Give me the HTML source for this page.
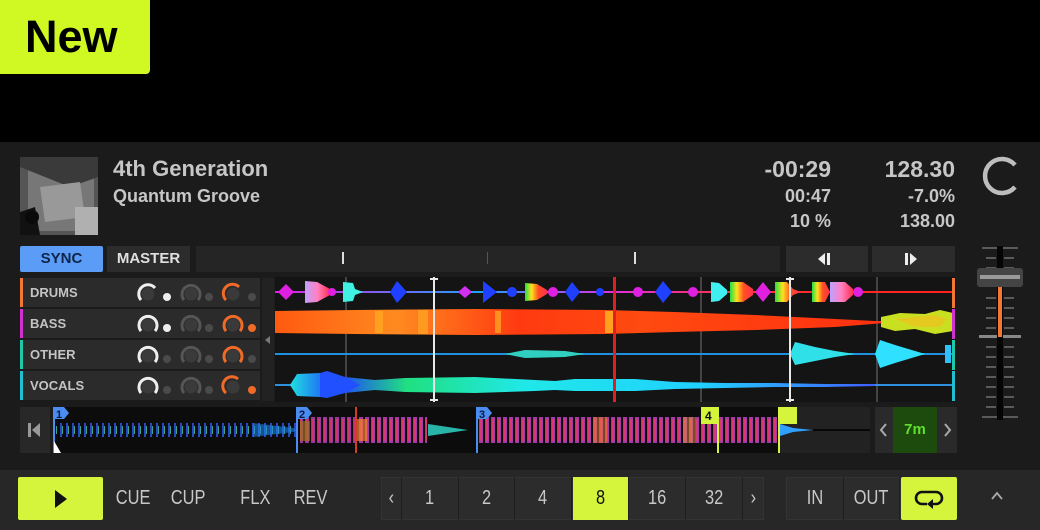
<!DOCTYPE html>
<html><head><meta charset="utf-8"><style>
*{margin:0;padding:0;box-sizing:border-box}
body{width:1040px;height:530px;background:#000;overflow:hidden;position:relative;font-family:"Liberation Sans",Arial,sans-serif}
.a{position:absolute}
.badge{left:0;top:0;width:150px;height:74px;background:#d0f823;border-radius:0 0 4px 0;color:#000;font-weight:bold;font-size:45px;line-height:74px;padding-left:25px}
.deck{left:0;top:142px;width:1040px;height:328px;background:#1b1b1b}
.bot{left:0;top:470px;width:1040px;height:60px;background:#272727}
.t{color:#c6c6c6;font-weight:bold}
.num{color:#c6c6c6;text-align:right;font-weight:bold}
.stem{left:20px;width:240px;height:29px;background:#2b2b2b;color:#c4c4c4;font-size:13px;font-weight:bold;line-height:29px;padding-left:10px}
.stem i{position:absolute;left:0;top:0;width:3px;height:29px}
.cell{top:477px;height:43px;color:#c8c8c8;font-size:20px;line-height:43px;text-align:center;border-right:1px solid #1e1e1e}
.cond{display:inline-block;transform:scaleX(.82)}
</style></head><body>
<div class="a badge">New</div>
<div class="a deck"></div>
<div class="a bot"></div>

<svg class="a" style="left:20px;top:157px" width="78" height="78">
<rect width="78" height="78" fill="#555"/>
<rect x="8" y="8" width="66" height="66" fill="#777"/>
<polygon points="0,10 50,30 78,20 78,0 0,0" fill="#3a3a3a"/>
<polygon points="20,30 60,25 65,60 25,65" fill="#999"/>
<rect x="55" y="50" width="23" height="28" fill="#b0b0b0"/>
<path d="M0 55 L15 50 L20 78 L0 78Z" fill="#111"/>
<circle cx="12" cy="60" r="7" fill="#0a0a0a"/>
</svg>
<div class="a t" style="left:113px;top:156px;font-size:22px">4th Generation</div>
<div class="a t" style="left:113px;top:186px;font-size:18px">Quantum Groove</div>
<div class="a num" style="left:700px;width:131px;top:156px;font-size:23px">-00:29</div>
<div class="a num" style="left:700px;width:131px;top:186px;font-size:18px">00:47</div>
<div class="a num" style="left:700px;width:131px;top:211px;font-size:18px">10 %</div>
<div class="a num" style="left:820px;width:135px;top:156px;font-size:23px">128.30</div>
<div class="a num" style="left:820px;width:135px;top:186px;font-size:18px">-7.0%</div>
<div class="a num" style="left:820px;width:135px;top:211px;font-size:18px">138.00</div>
<svg class="a" style="left:980px;top:156px" width="40" height="40"><path d="M35 9 A17 17 0 1 0 35 31" fill="none" stroke="#bdbdbd" stroke-width="4.5"/></svg>

<div class="a" style="left:20px;top:246px;width:83px;height:26px;background:#5a9cf6;border-radius:2px;color:#10244a;font-weight:bold;font-size:15px;text-align:center;line-height:26px">SYNC</div>
<div class="a" style="left:107px;top:246px;width:83px;height:26px;background:#2c2c2c;color:#e0e0e0;font-weight:bold;font-size:15px;text-align:center;line-height:26px">MASTER</div>
<div class="a" style="left:196px;top:246px;width:584px;height:26px;background:#252525"></div>
<div class="a" style="left:342px;top:252px;width:2px;height:12px;background:#ddd"></div>
<div class="a" style="left:487px;top:252px;width:1px;height:12px;background:#555"></div>
<div class="a" style="left:634px;top:252px;width:2px;height:12px;background:#ddd"></div>
<div class="a" style="left:786px;top:246px;width:82px;height:26px;background:#2c2c2c"></div>
<div class="a" style="left:872px;top:246px;width:83px;height:26px;background:#2c2c2c"></div>
<svg class="a" style="left:818px;top:252px" width="16" height="14"><polygon points="0,7 7,1 7,13" fill="#eee"/><rect x="9" y="1" width="3" height="12" fill="#eee"/></svg>
<svg class="a" style="left:905px;top:252px" width="16" height="14"><rect x="0" y="1" width="3" height="12" fill="#eee"/><polygon points="5,1 12,7 5,13" fill="#eee"/></svg>

<div class="a stem" style="top:278px"><i style="background:#f07830"></i>DRUMS</div>
<div class="a stem" style="top:309px"><i style="background:#d030d0"></i>BASS</div>
<div class="a stem" style="top:340px"><i style="background:#20c8a8"></i>OTHER</div>
<div class="a stem" style="top:371px"><i style="background:#20c0d0"></i>VOCALS</div>
<div class="a" style="left:262px;top:278px;width:12px;height:123px;background:#222"></div>
<svg class="a" style="left:264px;top:335px" width="8" height="10"><polygon points="6,1 1,5 6,9" fill="#777"/></svg>
<svg class="a" style="left:130px;top:278px" width="130" height="124">
<defs><g id="k"><circle cx="0" cy="0" r="6.5" fill="#3a3a3a"/></g></defs>
<g fill="none" stroke-width="3" stroke-linecap="butt">
<g transform="translate(18,16)"><use href="#k"/><path d="M-7 6 A9 9 0 1 1 7 -6" stroke="#eee"/></g>
<g transform="translate(61,16)"><use href="#k"/><path d="M-7 6 A9 9 0 1 1 7 6" stroke="#555"/></g>
<g transform="translate(103,16)"><use href="#k"/><path d="M-7 6 A9 9 0 1 1 6 -7" stroke="#f06a28"/></g>
<g transform="translate(18,47)"><use href="#k"/><path d="M-7 6 A9 9 0 1 1 7 6" stroke="#eee"/></g>
<g transform="translate(61,47)"><use href="#k"/><path d="M-7 6 A9 9 0 1 1 7 6" stroke="#555"/></g>
<g transform="translate(103,47)"><use href="#k"/><path d="M-7 6 A9 9 0 1 1 7 6" stroke="#f06a28"/></g>
<g transform="translate(18,78)"><use href="#k"/><path d="M-7 6 A9 9 0 1 1 7 6" stroke="#eee"/></g>
<g transform="translate(61,78)"><use href="#k"/><path d="M-7 6 A9 9 0 1 1 7 6" stroke="#555"/></g>
<g transform="translate(103,78)"><use href="#k"/><path d="M-7 6 A9 9 0 1 1 7 6" stroke="#f06a28"/></g>
<g transform="translate(18,109)"><use href="#k"/><path d="M-7 6 A9 9 0 1 1 7 6" stroke="#eee"/></g>
<g transform="translate(61,109)"><use href="#k"/><path d="M-7 6 A9 9 0 1 1 7 6" stroke="#555"/></g>
<g transform="translate(103,109)"><use href="#k"/><path d="M-7 6 A9 9 0 1 1 5 -8" stroke="#f06a28"/></g>
</g>
<circle cx="37" cy="19" r="4" fill="#eee"/><circle cx="79" cy="19" r="4" fill="#4a4a4a"/><circle cx="122" cy="19" r="4" fill="#4a4a4a"/>
<circle cx="37" cy="50" r="4" fill="#eee"/><circle cx="79" cy="50" r="4" fill="#4a4a4a"/><circle cx="122" cy="50" r="4" fill="#f06a28"/>
<circle cx="37" cy="81" r="4" fill="#4a4a4a"/><circle cx="79" cy="81" r="4" fill="#4a4a4a"/><circle cx="122" cy="81" r="4" fill="#4a4a4a"/>
<circle cx="37" cy="112" r="4" fill="#4a4a4a"/><circle cx="79" cy="112" r="4" fill="#4a4a4a"/><circle cx="122" cy="112" r="4" fill="#f06a28"/>
</svg>

<svg class="a" style="left:275px;top:277px" width="681" height="125">
<defs>
<linearGradient id="ln" x1="0" x2="1"><stop offset="0" stop-color="#e020e0"/><stop offset=".3" stop-color="#20a0ff"/><stop offset=".5" stop-color="#e030e0"/><stop offset=".7" stop-color="#ff3030"/><stop offset="1" stop-color="#ff2020"/></linearGradient>
<linearGradient id="bs" x1="0" x2="1"><stop offset="0" stop-color="#ff5a10"/><stop offset=".2" stop-color="#ff8a20"/><stop offset=".4" stop-color="#ff3a10"/><stop offset=".6" stop-color="#ff4a10"/><stop offset="1" stop-color="#ff3010"/></linearGradient>
<linearGradient id="vc" x1="0" x2="1"><stop offset="0" stop-color="#20e0e0"/><stop offset=".08" stop-color="#2040ff"/><stop offset=".2" stop-color="#20e080"/><stop offset=".4" stop-color="#20e8e8"/><stop offset=".7" stop-color="#20d0ff"/><stop offset="1" stop-color="#4060ff"/></linearGradient>
<linearGradient id="rb" x1="0" x2="1"><stop offset="0" stop-color="#20e040"/><stop offset=".3" stop-color="#ffe020"/><stop offset=".6" stop-color="#ff5020"/><stop offset="1" stop-color="#ff3050"/></linearGradient>
<linearGradient id="pb" x1="0" x2="1"><stop offset="0" stop-color="#c0a0ff"/><stop offset=".5" stop-color="#ff80c0"/><stop offset="1" stop-color="#ff3050"/></linearGradient>
</defs>
<rect width="681" height="125" fill="#141414"/>
<rect x="70" y="0" width="2" height="125" fill="#444"/>
<rect x="425" y="0" width="2" height="125" fill="#444"/>
<rect x="601" y="0" width="2" height="125" fill="#444"/>
<rect x="0" y="14" width="677" height="2" fill="url(#ln)"/>
<polygon points="3,15 11,7 19,15 11,23" fill="#e020e0"/>
<polygon points="30,4 42,5 55,12 55,18 42,25 30,26" fill="url(#pb)"/>
<circle cx="57" cy="15" r="4" fill="#e020e0"/>
<polygon points="68,5 78,6 80,12 88,15 80,18 78,24 68,25" fill="#40f0e0"/>
<polygon points="115,15 122,4 132,15 122,26" fill="#2040ff"/>
<polygon points="183,15 190,9 197,15 190,21" fill="#d030f0"/>
<polygon points="208,4 222,15 208,26" fill="#2040ff"/>
<circle cx="237" cy="15" r="5" fill="#2040ff"/>
<polygon points="250,6 262,7 272,13 272,17 262,23 250,24" fill="url(#rb)"/>
<circle cx="278" cy="15" r="5" fill="#e020e0"/>
<polygon points="290,15 297,5 305,15 297,25" fill="#2040ff"/>
<circle cx="325" cy="15" r="4" fill="#2040ff"/>
<circle cx="363" cy="15" r="5" fill="#e020e0"/>
<polygon points="380,15 388,4 397,15 388,26" fill="#2040ff"/>
<circle cx="418" cy="15" r="5" fill="#e020e0"/>
<polygon points="436,5 444,6 452,13 452,17 444,24 436,25" fill="#40f0f0"/>
<polygon points="455,5 468,5 478,12 478,18 468,25 455,25" fill="url(#rb)"/>
<polygon points="480,15 488,5 496,15 488,25" fill="#e020e0"/>
<polygon points="500,5 512,5 518,12 526,15 518,18 512,25 500,25" fill="url(#rb)"/>
<polygon points="537,5 550,5 555,15 550,25 537,25" fill="url(#rb)"/>
<polygon points="555,5 570,5 578,12 578,18 570,25 555,25" fill="url(#pb)"/>
<circle cx="583" cy="15" r="5" fill="#e020e0"/>
<polygon points="0,34 80,33 200,32 330,33 400,35 480,38 560,42 600,44 610,46 560,50 480,53 400,55 330,57 200,58 80,57 0,56" fill="url(#bs)"/>
<rect x="100" y="34" width="8" height="22" fill="#ffa020"/>
<rect x="143" y="33" width="10" height="24" fill="#ff9a20"/>
<rect x="220" y="34" width="6" height="22" fill="#ff9020"/>
<rect x="330" y="34" width="8" height="22" fill="#ffa020"/>
<rect x="600" y="44" width="80" height="2" fill="#ff3020"/>
<polygon points="606,40 625,36 650,37 665,33 678,36 678,54 660,57 640,52 620,54 606,50" fill="#c8e020"/>
<polygon points="620,42 640,40 660,38 672,42 665,50 640,50" fill="#f0c020" opacity=".7"/>
<rect x="0" y="76" width="677" height="2" fill="#2090e0"/>
<polygon points="230,77 250,73 290,74 310,77 290,80 250,81" fill="#30d0c0"/>
<polygon points="515,77 520,65 540,70 560,74 580,77 560,80 540,84 520,88" fill="#30e0e8"/>
<polygon points="600,77 605,63 620,68 640,74 650,77 640,80 620,86 605,91" fill="#30e0ff"/>
<rect x="670" y="68" width="6" height="18" fill="#30c0ff"/>
<rect x="0" y="107" width="677" height="2" fill="#3090e0"/>
<polygon points="15,108 22,97 45,96 70,100 100,103 130,101 200,100 260,103 280,104 300,102 360,102 400,105 450,106 500,106 550,107 600,107 600,109 550,110 500,110 450,111 400,112 360,114 300,114 280,113 260,114 200,116 130,115 100,113 70,116 45,120 22,119" fill="url(#vc)"/>
<polygon points="45,96 52,94 70,100 85,108 70,116 52,121 45,120" fill="#2050ff"/>
<rect x="338" y="0" width="3" height="125" fill="#e02020"/>
<rect x="158" y="0" width="2" height="125" fill="#e8e8e8"/>
<rect x="155" y="1" width="8" height="2" fill="#e8e8e8"/><rect x="155" y="122" width="8" height="2" fill="#e8e8e8"/>
<rect x="514" y="0" width="2" height="125" fill="#e8e8e8"/>
<rect x="511" y="1" width="8" height="2" fill="#e8e8e8"/><rect x="511" y="122" width="8" height="2" fill="#e8e8e8"/>
<rect x="677" y="1" width="3" height="30" fill="#f07830"/>
<rect x="677" y="32" width="3" height="30" fill="#d030d0"/>
<rect x="677" y="63" width="3" height="30" fill="#20c8a8"/>
<rect x="677" y="94" width="3" height="30" fill="#20c0d0"/>
</svg>

<div class="a" style="left:20px;top:407px;width:30px;height:46px;background:#282828"></div>
<svg class="a" style="left:26px;top:422px" width="18" height="16"><rect x="2" y="1" width="3" height="14" fill="#999"/><polygon points="14,1 6,8 14,15" fill="#999"/></svg>
<svg class="a" style="left:53px;top:407px" width="817" height="46">
<defs>
<pattern id="bl" width="6" height="46" patternUnits="userSpaceOnUse"><rect x="1" y="16" width="2" height="14" fill="#2a48c0"/><rect x="3" y="19" width="1" height="8" fill="#40a090"/></pattern>
<pattern id="pk" width="6" height="46" patternUnits="userSpaceOnUse"><rect x="0" y="10" width="4" height="26" fill="#c040c0"/><rect x="1" y="12" width="2" height="22" fill="#ff4080"/></pattern>
</defs>
<rect width="817" height="46" fill="#0c0c0c"/>
<rect x="727" width="90" height="46" fill="#222"/>
<rect x="3" y="10" width="240" height="26" fill="url(#bl)"/>
<polygon points="200,16 240,21 244,23 240,25 200,30" fill="#2080e0" opacity=".6"/>
<rect x="247" y="8" width="55" height="30" fill="url(#pk)" opacity=".8"/>
<rect x="247" y="14" width="10" height="20" fill="#a07020" opacity=".7"/>
<rect x="304" y="8" width="70" height="30" fill="url(#pk)" opacity=".85"/>
<rect x="304" y="12" width="10" height="22" fill="#f08030" opacity=".7"/>
<polygon points="375,17 395,20 415,23 395,26 375,29" fill="#30e0d0" opacity=".8"/>
<rect x="425" y="6" width="300" height="34" fill="url(#pk)" opacity=".85"/>
<rect x="540" y="10" width="14" height="26" fill="#f08030" opacity=".5"/>
<rect x="630" y="10" width="12" height="26" fill="#e09040" opacity=".5"/>
<polygon points="727,17 740,21 760,23 740,25 727,29" fill="#30a0ff"/>
<rect x="760" y="22" width="57" height="2" fill="#080808"/>
<rect x="0" y="0" width="2" height="46" fill="#4a8cf0"/>
<polygon points="0,0 11,0 16,6 11,12 0,12" fill="#4a8cf0"/><text x="3" y="11" font-size="11" font-weight="bold" fill="#0a1a40">1</text>
<polygon points="1,34 8,46 1,46" fill="#fff"/>
<rect x="243" y="0" width="2" height="46" fill="#4a8cf0"/>
<polygon points="243,0 254,0 259,6 254,12 243,12" fill="#4a8cf0"/><text x="246" y="11" font-size="11" font-weight="bold" fill="#0a1a40">2</text>
<rect x="302" y="0" width="2" height="46" fill="#d04020"/>
<rect x="423" y="0" width="2" height="46" fill="#4a8cf0"/>
<polygon points="423,0 434,0 439,6 434,12 423,12" fill="#4a8cf0"/><text x="426" y="11" font-size="11" font-weight="bold" fill="#0a1a40">3</text>
<rect x="664" y="0" width="2" height="46" fill="#d4f53c"/>
<rect x="648" y="0" width="18" height="17" fill="#d4f53c"/><text x="652" y="13" font-size="12" font-weight="bold" fill="#111">4</text>
<rect x="725" y="0" width="2" height="46" fill="#d4f53c"/>
<rect x="725" y="0" width="19" height="17" fill="#d4f53c"/>
</svg>
<div class="a" style="left:875px;top:407px;width:82px;height:46px;background:#2a2a2a"></div>
<div class="a" style="left:893px;top:407px;width:44px;height:46px;background:#1d4a0d;color:#5ee02a;font-weight:bold;font-size:15px;text-align:center;line-height:46px">7m</div>
<svg class="a" style="left:878px;top:422px" width="12" height="16"><path d="M8 2 L3 8 L8 14" fill="none" stroke="#aaa" stroke-width="2"/></svg>
<svg class="a" style="left:942px;top:422px" width="12" height="16"><path d="M3 2 L8 8 L3 14" fill="none" stroke="#aaa" stroke-width="2"/></svg>

<svg class="a" style="left:975px;top:244px" width="50" height="184">
<g fill="#5a5a5a">
<rect x="7" y="3" width="15" height="2"/><rect x="28" y="3" width="15" height="2"/>
<rect x="11" y="13" width="10" height="2"/><rect x="29" y="13" width="10" height="2"/>
<rect x="11" y="23" width="10" height="2"/><rect x="29" y="23" width="10" height="2"/>
<rect x="11" y="53" width="10" height="2"/><rect x="29" y="53" width="10" height="2"/>
<rect x="11" y="63" width="10" height="2"/><rect x="29" y="63" width="10" height="2"/>
<rect x="11" y="73" width="10" height="2"/><rect x="29" y="73" width="10" height="2"/>
<rect x="11" y="83" width="10" height="2"/><rect x="29" y="83" width="10" height="2"/>
<rect x="4" y="91" width="42" height="3" fill="#888"/>
<rect x="11" y="102" width="10" height="2"/><rect x="29" y="102" width="10" height="2"/>
<rect x="11" y="112" width="10" height="2"/><rect x="29" y="112" width="10" height="2"/>
<rect x="11" y="122" width="10" height="2"/><rect x="29" y="122" width="10" height="2"/>
<rect x="11" y="132" width="10" height="2"/><rect x="29" y="132" width="10" height="2"/>
<rect x="11" y="142" width="10" height="2"/><rect x="29" y="142" width="10" height="2"/>
<rect x="11" y="152" width="10" height="2"/><rect x="29" y="152" width="10" height="2"/>
<rect x="11" y="162" width="10" height="2"/><rect x="29" y="162" width="10" height="2"/>
<rect x="7" y="172" width="15" height="2"/><rect x="28" y="172" width="15" height="2"/>
</g>
<rect x="22" y="2" width="6" height="174" fill="#050505"/>
<rect x="23" y="43" width="4" height="50" fill="#f07830"/>
<rect x="2" y="24" width="46" height="19" rx="3" fill="#444"/>
<rect x="5" y="31" width="40" height="4" fill="#999"/>
</svg>

<div class="a" style="left:18px;top:477px;width:85px;height:43px;background:#d4f53c;border-radius:2px"></div>
<svg class="a" style="left:52px;top:488px" width="18" height="22"><polygon points="3,2 15,11 3,20" fill="#111"/></svg>
<div class="a" style="left:108px;top:477px;width:50px;height:43px;color:#c8c8c8;font-size:20px;line-height:43px;text-align:center"><span class="cond">CUE</span></div>
<div class="a" style="left:163px;top:477px;width:50px;height:43px;color:#c8c8c8;font-size:20px;line-height:43px;text-align:center"><span class="cond">CUP</span></div>
<div class="a" style="left:230px;top:477px;width:50px;height:43px;color:#c8c8c8;font-size:20px;line-height:43px;text-align:center"><span class="cond">FLX</span></div>
<div class="a" style="left:286px;top:477px;width:50px;height:43px;color:#c8c8c8;font-size:20px;line-height:43px;text-align:center"><span class="cond">REV</span></div>

<div class="a" style="left:381px;top:477px;width:383px;height:43px;background:#2c2c2c;border:1px solid #333"></div>
<div class="a cell" style="left:381px;width:21px"><span class="cond">‹</span></div>
<div class="a cell" style="left:402px;width:57px"><span class="cond">1</span></div>
<div class="a cell" style="left:459px;width:56px"><span class="cond">2</span></div>
<div class="a cell" style="left:515px;width:57px"><span class="cond">4</span></div>
<div class="a cell" style="left:573px;width:56px;background:#d4f53c;color:#111"><span class="cond">8</span></div>
<div class="a cell" style="left:629px;width:57px"><span class="cond">16</span></div>
<div class="a cell" style="left:686px;width:57px"><span class="cond">32</span></div>
<div class="a cell" style="left:743px;width:21px;border:none"><span class="cond">›</span></div>

<div class="a" style="left:786px;top:477px;width:115px;height:43px;background:#2c2c2c;border:1px solid #333"></div>
<div class="a cell" style="left:787px;width:57px"><span class="cond">IN</span></div>
<div class="a cell" style="left:844px;width:56px"><span class="cond">OUT</span></div>
<div class="a" style="left:901px;top:477px;width:56px;height:43px;background:#d4f53c;border-radius:2px"></div>
<svg class="a" style="left:913px;top:486px" width="32" height="24"><path d="M14 18 H9 A6 6 0 0 1 9 6 H23 A6 6 0 0 1 23 18 H20" fill="none" stroke="#111" stroke-width="2.6"/><polygon points="20,13 20,23 14,18" fill="#111"/></svg>
<svg class="a" style="left:990px;top:490px" width="14" height="12"><path d="M2 9 L7 3 L12 9" fill="none" stroke="#aaa" stroke-width="1.8"/></svg>
</body></html>
